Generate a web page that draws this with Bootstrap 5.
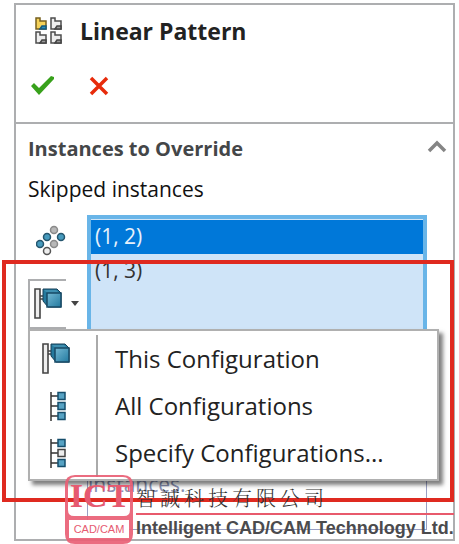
<!DOCTYPE html>
<html lang="en">
<head>
<meta charset="utf-8">
<meta name="viewport" content="width=device-width, initial-scale=1">
<title>Linear Pattern</title>
<link href="https://cdn.jsdelivr.net/npm/bootstrap@5.3.0/dist/css/bootstrap.min.css" rel="stylesheet">
<style>
body{font-family:"Open Sans","Noto Sans",sans-serif;color:#1b1b1b;background:#fff;font-size:21px;line-height:28px}
svg{display:block;flex:none}
.stage{padding:3px 4px 3px 14px}
.panel{border:2px solid #adaeb0}
.panel-head{border-bottom:2px solid #adaeb0;padding:10px 18px 22px}
.panel-head h1{font-size:23px;line-height:32px;font-weight:700;color:#222}
.title-row{gap:18px}
.actions{margin:25px 0 0 -4px}
.icon-btn{background:none;border:0;padding:0}
.section-body{padding:11px 26px 9px 12px}
.section-head{margin-right:-20px}
.section-head h2{font-size:20px;line-height:28px;font-weight:700;color:#444648}
.skip-label{color:#111;margin-top:12px}
.side{width:59px}
.listbox{border:4px solid #69b5e8;background:#cfe4f8;height:120px;margin:0;padding:1px 0}
.listbox li{height:34px;line-height:33px;padding:0 4px;color:#333}
.listbox li[aria-selected="true"]{background:#0078d9;color:#e6f1fb}
.scope{margin-top:20px}
.scope-btn{width:56px;height:50px;background:none;border:0;padding:0}
.scope-face{width:38px;height:50px;border:2px solid #adaeb0;border-right:0}
.menu{position:absolute;top:100%;left:0;width:411px;height:152px;background:#fff;border:2px solid #b0b0b0;box-shadow:4px 4px 4px rgba(0,0,0,.5);padding:4px 0 2px;z-index:3}
.menu-icons{width:68px;border-right:2px solid #aaa;padding-left:12px}
.menu-icons>span{height:47px}
.menu button{height:47px;font-size:24px;line-height:46px;background:none;border:0;padding:0 0 0 17px;text-align:left;color:#222;white-space:nowrap}
.message{border:1px solid #9aa0c4;height:191px;margin-left:59px;padding:130px 0 0;color:#8991b4}
.frame{position:absolute;left:2px;right:5px;top:260px;height:242px;border:4px solid #df2a20;z-index:4}
.brand{position:absolute;left:65px;right:9px;top:475px;z-index:5;gap:3px}
.brand-zh{font-family:"Noto Serif CJK TC","Noto Sans CJK TC",serif;font-size:20px;line-height:26px;letter-spacing:4px;font-weight:300;color:#333;padding-top:10px}
.brand-line{border-top:2px solid #e85a6c;margin-top:2px}
.brand-en{font-family:"Liberation Sans",Arial,sans-serif;font-weight:700;font-size:18px;line-height:26px;color:#4b4b4d;white-space:nowrap}
</style>
</head>
<body>
<svg width="0" height="0" class="position-absolute" aria-hidden="true">
<defs>
<linearGradient id="blue" x2="1" y2="1"><stop stop-color="#75b9d4"/><stop offset="1" stop-color="#22799f"/></linearGradient>
<symbol id="block" viewBox="0 0 28 32"><path d="M1 1h5v29H1z" fill="#eee" stroke="#444" stroke-width="1.6"/><path d="M6 8h4V5M6 11h6" fill="none" stroke="#444" stroke-width="1.500"/><path d="M9 1h14l4 4v14H14L9 13z" fill="#24799d" stroke="#173f56"/><path d="M10 2h12l3 3H13z" fill="#3f8fb0"/><path d="M13 5h14v14H13z" fill="url(#blue)" stroke="#174a66" stroke-width="1.500"/></symbol>
<symbol id="tree" viewBox="0 0 16 30"><path d="M1 1v29M1 5h7M1 15h7M1 25h7" fill="none" stroke="#333" stroke-width="1.500"/><path d="M8 1.500h7v7H8zM8 21.500h7v7H8z" fill="#56a2c3" stroke="#154e6c" stroke-width="1.500"/></symbol>
</defs>
</svg>
<div class="stage position-relative">
<main class="panel">
<header class="panel-head">
<div class="title-row d-flex align-items-center">
<svg width="28" height="28" viewBox="0 0 28 28" stroke-width="1.500"><g stroke="#4e4e4e" fill="#eee"><path d="M2 1h4v3h6v8H2z" stroke="#77601f" fill="#f5d259"/><path d="M17 1h4v3h6v8H17zM2 15h4v3h6v8H2zM17 15h4v3h6v8H17z"/></g><path d="M6 12l2-3h4v3z" stroke="#155a7d" fill="#2b91bd"/><path d="M21 12l2-3h4v3zM6 26l2-3h4v3zM21 26l2-3h4v3z" fill="#999" stroke="#444"/></svg>
<h1 class="m-0">Linear Pattern</h1>
</div>
<div class="actions d-flex align-items-center">
<button class="icon-btn" aria-label="OK"><svg width="24" height="28" viewBox="0 0 24 28"><path d="M1 14l3-3 5 5L21 4l3 1v2L9 23z" fill="#38a11b"/></svg></button>
<button class="icon-btn ms-4 ps-2" aria-label="Cancel"><svg width="24" height="28" viewBox="0 0 24 28"><path d="M5 6l16 16M21 6L5 22" stroke="#e72b0b" stroke-width="3.500"/></svg></button>
</div>
</header>
<section class="section-body">
<div class="section-head d-flex align-items-center justify-content-between">
<h2 class="m-0">Instances to Override</h2>
<button class="icon-btn" aria-label="Collapse"><svg width="20" height="20" viewBox="0 0 20 20"><path d="M2 12l8-8 8 8" fill="none" stroke="#858585" stroke-width="3.500"/></svg></button>
</div>
<div class="skip-label" id="skipped">Skipped instances</div>
<div class="d-flex mt-2 pt-1">
<div class="side flex-shrink-0">
<svg class="ms-2 mt-2" width="30" height="36" viewBox="0 0 30 36" stroke-width="1.500"><g fill="#b8b8b8" stroke="#8a8a8a"><circle cx="18" cy="7" r="3.500"/><circle cx="18" cy="21" r="3.500"/></g><g fill="#479abd" stroke="#25566e"><circle cx="11" cy="14" r="3.500"/><circle cx="25" cy="14" r="3.500"/><circle cx="4" cy="21" r="3.500"/></g><circle cx="11" cy="28" r="3.500" fill="#eee" stroke="#555"/></svg>
<div class="scope position-relative">
<button class="scope-btn d-flex align-items-center" aria-label="Configuration scope" aria-expanded="true">
<span class="scope-face d-flex align-items-center ps-1"><svg width="28" height="32"><use href="#block"/></svg></span>
<svg class="ms-1" width="10" height="6" viewBox="0 0 10 6"><path d="M1 0h8L5 5z" fill="#444"/></svg>
</button>
<div class="menu d-flex">
<div class="menu-icons d-flex flex-column flex-shrink-0">
<span class="d-flex align-items-center"><svg width="28" height="32"><use href="#block"/></svg></span>
<span class="d-flex align-items-center ps-2"><svg width="16" height="30" viewBox="0 0 16 30"><use href="#tree"/><path d="M8 11.500h7v7H8z" fill="#56a2c3" stroke="#154e6c" stroke-width="1.500"/></svg></span>
<span class="d-flex align-items-center ps-2"><svg width="16" height="30" viewBox="0 0 16 30"><use href="#tree"/><path d="M8 11.500h7v7H8z" fill="#eee" stroke="#444" stroke-width="1.500"/></svg></span>
</div>
<div class="d-flex flex-column flex-grow-1">
<button>This Configuration</button>
<button>All Configurations</button>
<button>Specify Configurations...</button>
</div>
</div>
</div>
</div>
<ul class="listbox list-unstyled flex-grow-1" role="listbox" aria-labelledby="skipped">
<li role="option" aria-selected="true">(1, 2)</li>
<li role="option" aria-selected="false">(1, 3)</li>
</ul>
</div>
<div class="message mt-1">instances.</div>
</section>
</main>
<div class="frame"></div>
<div class="brand d-flex">
<svg width="68" height="69" viewBox="0 0 68 69"><path fill-rule="evenodd" d="M10 0h48q10 0 10 10v49q0 10-10 10H10Q0 69 0 59V10Q0 0 10 0zM10 2q-7 0-7 8v25q0 6 6 6h50q6 0 6-6V10q0-8-7-8z" fill="#e95f75" fill-opacity=".92"/><rect x="4" y="45" width="60" height="18" fill="#fff"/><text x="35" y="32" text-anchor="middle" font-family="Liberation Serif" font-weight="700" font-size="34" fill="#e65a70">ICT</text><text x="34" y="58" text-anchor="middle" font-family="Liberation Sans" font-size="11" fill="#e65a70">CAD/CAM</text></svg>
<div class="flex-grow-1">
<div class="brand-zh" lang="zh-Hant">智誠科技有限公司</div>
<div class="brand-line"></div>
<div class="brand-en">Intelligent CAD/CAM Technology Ltd.</div>
</div>
</div>
</div>
<script src="https://cdn.jsdelivr.net/npm/bootstrap@5.3.0/dist/js/bootstrap.bundle.min.js"></script>
</body>
</html>
